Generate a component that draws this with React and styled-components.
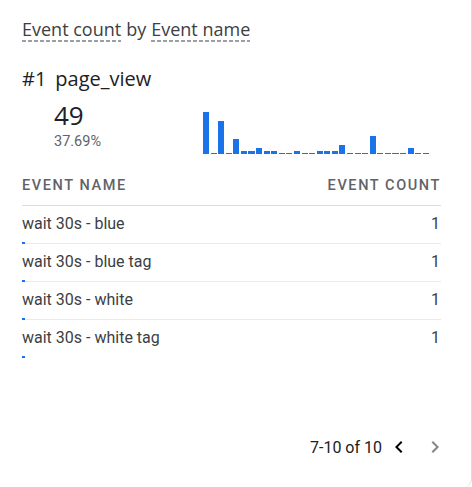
import styled, { createGlobalStyle } from 'styled-components';

const Global = createGlobalStyle`
  html, body {
    margin: 0;
    padding: 0;
    background: #fff;
  }
  body {
    font-family: Roboto, "Liberation Sans", sans-serif;
    -webkit-font-smoothing: antialiased;
  }
`;

// Card
const Card = styled.div`
  box-sizing: border-box;
  width: 472px;
  height: 487px;
  padding: 17px 30px 0 22px;
  background: #fff;
  border-right: 1px solid #dadce0;
  border-bottom-right-radius: 8px;
  display: flex;
  flex-direction: column;
`;

const Title = styled.div`
  font-family: "Open Sans", Roboto, sans-serif;
  font-size: 18px;
  line-height: 24px;
  color: #3c4043;
  display: flex;
  gap: 5px;
`;

const Dimension = styled.span`
  padding-bottom: 1px;
  background-image: linear-gradient(to right, #9aa0a6 65%, transparent 65%);
  background-size: 6px 2px;
  background-repeat: repeat-x;
  background-position: 0 100%;
`;

// Top item
const TopLine = styled.div`
  margin-top: 24px;
  font-family: "Open Sans", Roboto, sans-serif;
  font-size: 20px;
  line-height: 26px;
  color: #202124;
  display: flex;
  gap: 9px;
`;

const StatRow = styled.div`
  display: flex;
  align-items: flex-end;
  padding-left: 32px;
  margin-top: 7px;
`;

const StatCol = styled.div`
  width: 149px;
  display: flex;
  flex-direction: column;
`;

const BigValue = styled.div`
  font-family: "Open Sans", Roboto, sans-serif;
  font-size: 26px;
  line-height: 33px;
  color: #202124;
`;

const Percent = styled.div`
  font-size: 14.5px;
  line-height: 20px;
  color: #5f6368;
`;

const Chart = styled.div`
  width: 226px;
  height: 44px;
  display: flex;
  align-items: flex-end;
  gap: 1.5px;
  margin-bottom: -2px;
`;

const Bar = styled.div`
  flex: 1;
  background: #1a73e8;
`;

// Table
const Table = styled.div`
  margin-top: 24px;
  display: flex;
  flex-direction: column;
`;

const HeadRow = styled.div`
  display: flex;
  justify-content: space-between;
  padding-bottom: 9px;
  border-bottom: 1px solid #dadce0;
  font-size: 14.5px;
  line-height: 20px;
  font-weight: 500;
  letter-spacing: 1.6px;
  color: #5f6368;
`;

const Row = styled.div`
  display: flex;
  justify-content: space-between;
  align-items: flex-start;
  height: 38px;
  box-sizing: border-box;
  padding-top: 8px;
  border-bottom: 1px solid ${p => (p.$last ? 'transparent' : '#e8eaed')};
`;

const NameCell = styled.div`
  display: flex;
  flex-direction: column;
`;

const Name = styled.div`
  font-size: 16px;
  line-height: 20px;
  color: #3c4043;
`;

const MiniBar = styled.div`
  margin-top: 8px;
  height: 2px;
  background: #1a73e8;
`;

const Count = styled.div`
  font-size: 16px;
  line-height: 20px;
  color: #3c4043;
  padding-right: 1px;
`;

// Pagination
const Pager = styled.div`
  margin-top: auto;
  margin-bottom: 26px;
  display: flex;
  justify-content: flex-end;
  align-items: center;
  margin-right: -12px;
  font-size: 16px;
  color: #202124;
`;

const PageText = styled.span`
  margin-right: -1px;
`;

const PageButton = styled.button`
  width: 36px;
  height: 28px;
  border: none;
  background: transparent;
  padding: 0;
  display: flex;
  align-items: center;
  justify-content: center;
  color: ${p => (p.$disabled ? '#80868b' : '#000')};

  svg {
    display: block;
  }
`;

const Chevron = ({ dir }) => (
  <svg width="24" height="24" viewBox="0 0 24 24" fill="currentColor">
    {dir === 'left' ? (
      <path d="M15.41 7.41L14 6l-6 6 6 6 1.41-1.41L10.83 12z" />
    ) : (
      <path d="M8.59 16.59L10 18l6-6-6-6-1.41 1.41L13.17 12z" />
    )}
  </svg>
);

const series = [14, 0, 11, 0, 5, 1, 1, 2, 1, 1, 0, 0, 1, 0, 0, 1, 1, 1, 3, 0, 0, 0, 6, 0, 0, 0, 0, 2, 0, 0];

const rows = [
  'wait 30s - blue',
  'wait 30s - blue tag',
  'wait 30s - white',
  'wait 30s - white tag',
];

export default function App() {
  return (
    <>
      <Global />
      <Card>
        <Title>
          <Dimension>Event count</Dimension>
          <span>by</span>
          <Dimension>Event name</Dimension>
        </Title>

        <TopLine>
          <span>#1</span>
          <span>page_view</span>
        </TopLine>

        <StatRow>
          <StatCol>
            <BigValue>49</BigValue>
            <Percent>37.69%</Percent>
          </StatCol>
          <Chart>
            {series.map((v, i) => (
              <Bar key={i} style={{ height: Math.max(1.5, v * 3) }} />
            ))}
          </Chart>
        </StatRow>

        <Table>
          <HeadRow>
            <span>EVENT NAME</span>
            <span>EVENT COUNT</span>
          </HeadRow>
          {rows.map((name, i) => (
            <Row key={name} $last={i === rows.length - 1}>
              <NameCell>
                <Name>{name}</Name>
                <MiniBar style={{ width: 3 }} />
              </NameCell>
              <Count>1</Count>
            </Row>
          ))}
        </Table>

        <Pager>
          <PageText>7-10 of 10</PageText>
          <PageButton>
            <Chevron dir="left" />
          </PageButton>
          <PageButton $disabled>
            <Chevron dir="right" />
          </PageButton>
        </Pager>
      </Card>
    </>
  );
}
